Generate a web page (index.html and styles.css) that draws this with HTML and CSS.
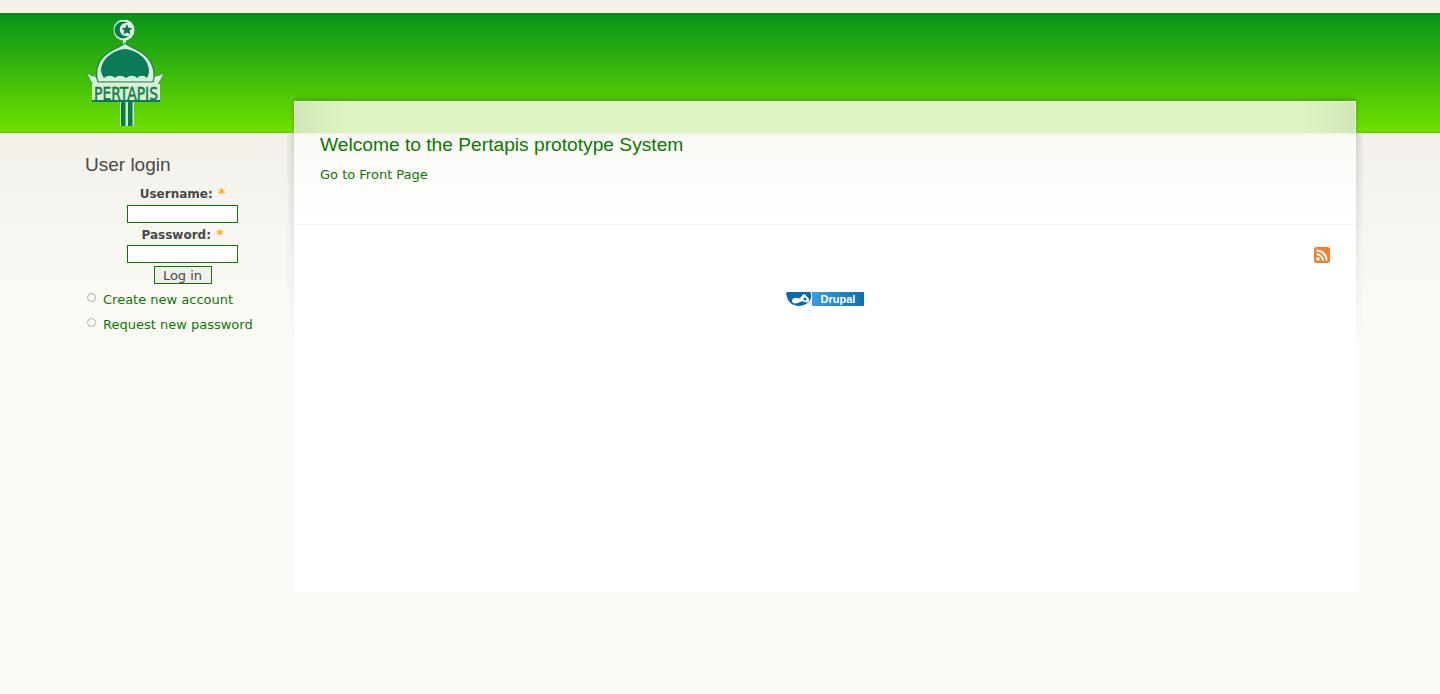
FILE: index.html
```html
<!DOCTYPE html>
<html lang="en">
<head>
    <meta charset="UTF-8">
    <title>Pertapis</title>
    <link rel="stylesheet" href="styles.css">
</head>
<body>
    <div class="top-strip"></div>

    <div class="header">
        <a class="logo" href="#" aria-label="Pertapis">
            <svg width="80" height="110" viewBox="0 0 80 110">
                <!-- crescent and star -->
                <circle cx="38" cy="10" r="10.5" fill="#dff3e2"/>
                <circle cx="37" cy="10" r="8.5" fill="#0b7a4c"/>
                <circle cx="40.5" cy="9.5" r="6.8" fill="#dff3e2"/>
                <polygon points="41,4 42.6,7.8 46.5,8.2 43.6,10.8 44.4,14.6 41,12.6 37.6,14.6 38.4,10.8 35.5,8.2 39.4,7.8" fill="#0b7a4c"/>
                <rect x="37" y="19" width="3" height="6" fill="#dff3e2"/>
                <!-- eaves -->
                <path d="M1 53 C4 55 6 56 8 56 L12 58 L66 58 L70 56 C72 56 75 55 78 52 C76 58 74 62 70 66 L8 66 C5 62 3 58 1 53 Z" fill="#e6f6e6" stroke="#0f7f4f" stroke-width="0.6"/>
                <!-- dome -->
                <path d="M39 23 C43 28 57 29 64 41 C69 49 69 56 67 62 L12 62 C9 54 10 48 14 41 C21 29 35 28 39 23 Z" fill="#d5efd8" stroke="#0f7f4f" stroke-width="1.2"/>
                <path d="M39 29 C50 30 62 38 63 50 C63 54 62 56 61 58 C58 55 54 55 51 58 C48 55 44 55 40 58 C36 55 32 55 29 58 C26 55 22 55 18 58 C16 55 15 53 15 50 C16 38 28 30 39 29 Z" fill="#0b7a58"/>
                <!-- post -->
                <rect x="34" y="78" width="14" height="28" fill="#c9ecc0"/>
                <rect x="35" y="78" width="4.5" height="28" fill="#0b7a4c"/>
                <rect x="42" y="78" width="4.5" height="28" fill="#0b7a4c"/>
                <!-- name plate -->
                <rect x="6" y="64" width="68" height="17" fill="#d9f0cf"/>
                <rect x="6" y="80" width="68" height="2" fill="#0b7a4c"/>
                <text class="logo-text" transform="translate(40 80) scale(1 1.45)" text-anchor="middle" textLength="64" lengthAdjust="spacingAndGlyphs">PERTAPIS</text>
            </svg>
        </a>
    </div>

    <div class="page">
        <div class="sidebar">
            <h2>User login</h2>
            <form class="login-form">
                <label for="username">Username: <span class="required">*</span></label>
                <input id="username" type="text">
                <label for="password">Password: <span class="required">*</span></label>
                <input id="password" type="password">
                <button type="button">Log in</button>
            </form>
            <ul class="links">
                <li><a href="#">Create new account</a></li>
                <li><a href="#">Request new password</a></li>
            </ul>
        </div>

        <div class="main">
            <div class="main-tab"></div>
            <div class="welcome">
                <h1>Welcome to the Pertapis prototype System</h1>
                <a href="#">Go to Front Page</a>
            </div>
            <div class="main-body">
                <div class="feed-row">
                    <svg width="16" height="16" viewBox="0 0 16 16">
                        <rect width="16" height="16" rx="2.5" fill="#ee8131"/>
                        <circle cx="4" cy="12" r="1.8" fill="#fff"/>
                        <path d="M2.5 7.2 A6.3 6.3 0 0 1 8.8 13.5" fill="none" stroke="#fff" stroke-width="2"/>
                        <path d="M2.5 3.4 A10.1 10.1 0 0 1 12.6 13.5" fill="none" stroke="#fff" stroke-width="2"/>
                    </svg>
                </div>
                <div class="badge-row">
                    <span class="drupal-badge">
                        <span class="drupal-icon">
                            <svg width="26" height="14" viewBox="0 0 26 14">
                                <path d="M2 0 H24 Q25 0 25 2 V6 C24 10 19 14 13 14 C7 14 2 10 1 5 L0 2 Q0 0 2 0 Z" fill="#0a6aa8"/>
                                <path d="M6 9 C6 6 9 5 11 6 C13 7 14 6 15 5 C16 3 18 2 19 2 C19 4 23 5 23 8 C23 10 21 11 19 10 C17 9 16 9 14 10 C11 12 6 12 6 9 Z" fill="#fff"/>
                                <circle cx="19" cy="7" r="1.6" fill="#0a6aa8"/>
                            </svg>
                        </span>
                        <span class="drupal-name">Drupal</span>
                    </span>
                </div>
            </div>
        </div>
    </div>
</body>
</html>
```

FILE: styles.css
```css
* {
    margin: 0;
    padding: 0;
    box-sizing: border-box;
}

html,
body {
    height: 694px;
    overflow: hidden;
}

body {
    font-family: "DejaVu Sans", Verdana, sans-serif;
    font-size: 13px;
    background: #fbfaf5;
    color: #494949;
}

a {
    color: #0a7a00;
    text-decoration: none;
}

.top-strip {
    height: 13px;
    background: #f3f1ea;
}

.header {
    height: 120px;
    padding: 7px 0 0 86px;
    background: linear-gradient(to bottom, #0a8a17, #0b9517 4px, #6fe000 118px, #5fc400);
}

.logo {
    display: block;
    width: 80px;
}

.logo-text {
    font-family: "DejaVu Sans", sans-serif;
    font-size: 12px;
    fill: #0b7a4c;
    stroke: #0b7a4c;
    stroke-width: 0.3;
}

.page {
    display: flex;
    align-items: flex-start;
    height: 561px;
    padding-left: 85px;
    background: linear-gradient(to bottom, #f2f0e9, #fbfaf5 170px);
}

.sidebar {
    width: 209px;
    padding-top: 21px;
}

.sidebar h2 {
    font-family: "Liberation Sans", Arial, sans-serif;
    font-size: 19px;
    font-weight: normal;
    line-height: 21px;
    color: #494949;
}

.login-form {
    display: flex;
    flex-direction: column;
    align-items: center;
    width: 195px;
    margin-top: 8px;
}

.login-form label {
    height: 21px;
    font-size: 12px;
    font-weight: bold;
    line-height: 23px;
}

.login-form label:first-child {
    height: 22px;
}

.required {
    color: #ffae00;
    margin-left: 1px;
    font-size: 14px;
    line-height: 14px;
}

.login-form input {
    width: 111px;
    height: 18px;
    margin-bottom: 1px;
    border: 1px solid #0a7a00;
    background: white;
}

.login-form button {
    width: 58px;
    height: 18px;
    margin-top: 2px;
    padding-top: 1px;
    border: 1px solid #0a7a00;
    background: #f1f0ec;
    color: #494949;
    font-family: inherit;
    font-size: 13px;
    line-height: 16px;
}

.links {
    list-style: none;
    margin-top: 3px;
    padding-left: 18px;
}

.links li {
    position: relative;
    height: 25px;
    line-height: 25px;
}

.links li::before {
    content: "";
    position: absolute;
    left: -16px;
    top: 6px;
    width: 7px;
    height: 7px;
    border: 1px solid #b0b0a8;
    border-radius: 50%;
    background: #fbfaf5;
}

.main {
    width: 1062px;
    height: 491px;
    margin-top: -32px;
    position: relative;
    background: white;
}

/* side shadows fade out further down the panel */
.main::before,
.main::after {
    content: "";
    position: absolute;
    top: 32px;
    width: 8px;
    height: 210px;
    -webkit-mask-image: linear-gradient(to bottom, #000, transparent);
    mask-image: linear-gradient(to bottom, #000, transparent);
}

.main::before {
    left: -8px;
    background: linear-gradient(to left, rgba(0,0,0,0.12), transparent);
}

.main::after {
    right: -8px;
    background: linear-gradient(to right, rgba(0,0,0,0.12), transparent);
}

.main-tab {
    height: 32px;
    border-top: 1px solid #eefbe2;
    border-left: 1px solid #eefbe2;
    border-right: 1px solid #eefbe2;
    border-radius: 2px 2px 0 0;
    background: linear-gradient(to right, #cfe6b6, #ddf4c2 50px, #ddf4c2 1010px, #cfe6b6);
    box-shadow: 0 -2px 5px rgba(0,0,0,0.2);
}

.welcome {
    height: 92px;
    padding: 1px 26px 0;
    border-bottom: 1px solid #f4f4f0;
    background: linear-gradient(to bottom, #f3f1ec, #fbf9f5 3px, #ffffff);
    position: relative;
}

.welcome h1 {
    font-family: "Liberation Sans", Arial, sans-serif;
    font-size: 19.2px;
    font-weight: normal;
    line-height: 22px;
    color: #0a7a00;
}

.welcome a {
    display: block;
    margin-top: 11px;
    line-height: 16px;
}

.main-body {
    position: relative;
    padding: 22px 26px 0;
    background: white;
}

.feed-row {
    display: flex;
    justify-content: flex-end;
}

.feed-row svg {
    display: block;
}

.badge-row {
    display: flex;
    justify-content: center;
    margin-top: 29px;
}

.drupal-badge {
    display: flex;
    width: 78px;
    height: 14px;
    font-family: "Liberation Sans", Arial, sans-serif;
    font-size: 11px;
    font-weight: bold;
    line-height: 14px;
    color: white;
}

.drupal-icon {
    width: 26px;
    height: 14px;
}

.drupal-icon svg {
    display: block;
}

.drupal-name {
    flex: 1;
    text-align: center;
    background: linear-gradient(to right, #3a9fdf, #1270b0);
}
```
